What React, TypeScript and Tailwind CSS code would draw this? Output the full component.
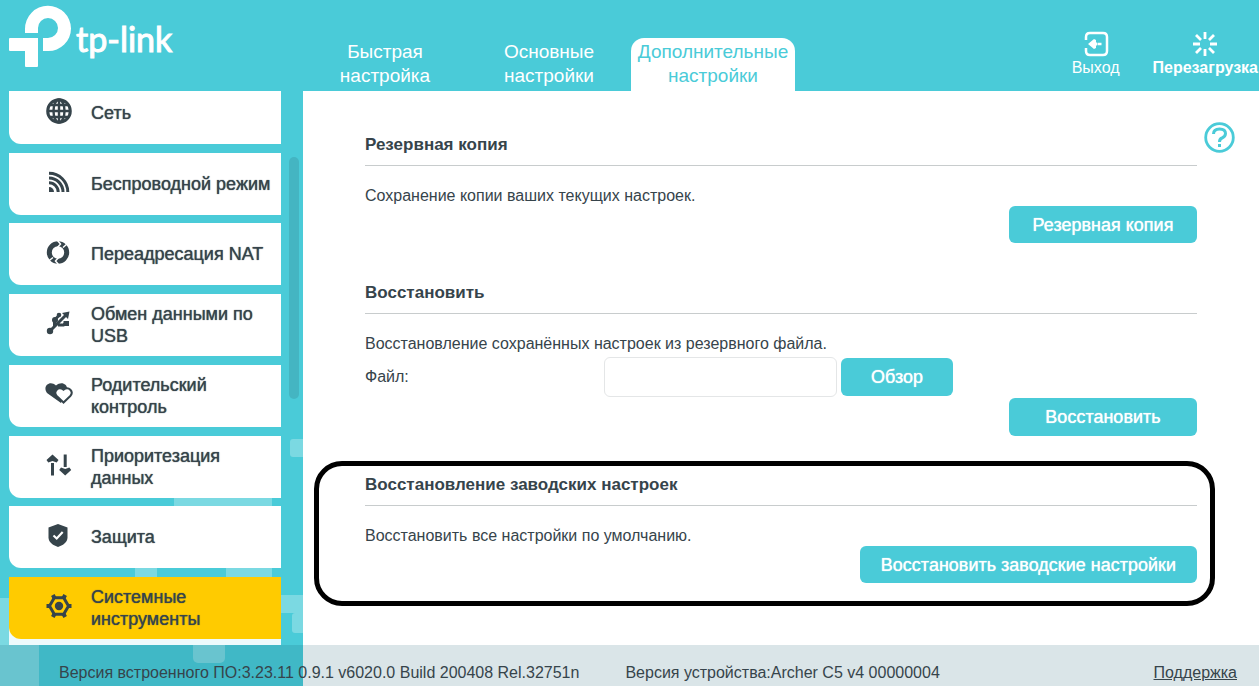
import type { ReactNode } from "react";

const GlobeIcon = () => (
    <svg width="28" height="28" viewBox="0 0 28 28" fill="none" stroke="#36444b" strokeWidth="2.4">
        <circle cx="14" cy="14" r="11.3" strokeWidth="3" />
        <ellipse cx="14" cy="14" rx="5.5" ry="11.5" />
        <path d="M14 2v24M2 14h24M4.5 8h19M4.5 20h19" />
    </svg>
);

const WirelessIcon = () => (
    <svg width="28" height="28" viewBox="0 0 28 28" fill="none" stroke="#36444b" strokeWidth="3">
        <path d="M4 5.2A18.8 18.8 0 0 1 22.8 24M4 10A14 14 0 0 1 18 24M4 14.8A9.2 9.2 0 0 1 13.2 24" />
        <path d="M4 19a5 5 0 0 1 5 5H4z" fill="#36444b" stroke="none" />
    </svg>
);

const NatIcon = () => (
    <svg width="28" height="28" viewBox="0 0 28 28" fill="none" stroke="#36444b">
        <circle cx="13" cy="14.5" r="8.700" strokeWidth="5" />
        <path d="M12.500 2.500l3 3.500-3 3.500M13.500 26.500l-3-3.500 3-3.500" stroke="#fff" strokeWidth="1.500" />
        <path d="M18 9.500l4.500-4M8 19.500l-5 4" stroke="#fff" strokeWidth="1.500" />
    </svg>
);

const UsbIcon = () => (
    <svg width="28" height="28" viewBox="0 0 28 28" fill="none" stroke="#36444b" strokeWidth="3">
        <path d="M5 22L21 6M9.500 17.500V11L14 6.500M13 16h5.500l3-3" />
        <circle cx="5" cy="22" r="3.200" fill="#36444b" stroke="none" />
        <circle cx="10" cy="11" r="3" fill="#36444b" stroke="none" />
        <circle cx="14" cy="6" r="2.300" fill="#36444b" stroke="none" />
        <path d="M17 4l7.500-1.500L23 10z" fill="#36444b" stroke="none" />
        <path d="M18.500 12H24v5h-5.500z" fill="#36444b" stroke="none" />
    </svg>
);

const HeartsIcon = () => (
    <svg width="28" height="28" viewBox="0 0 28 28" fill="#36444b">
        <path d="M16 23L2 13C-3 6 5-.5 11 5.500c5.500-5 12-1 11 4z" />
        <path
            d="M18.500 22.500L11.700 16C8 12 13 5.500 18.500 9.700C24 5.500 29 12 25.300 16z"
            fill="#fff"
            stroke="#36444b"
            strokeWidth="2"
        />
    </svg>
);

const PriorityIcon = () => (
    <svg width="28" height="28" viewBox="0 0 28 28" fill="#36444b">
        <path d="M7.500 3.500l6 5.500-1.800 2.500-4.200-1.500-4.200 1.500L1.500 9z" />
        <path d="M6 12h3v12.500H6zM18.700 3.500h3V16h-3z" />
        <path d="M20.200 24.500l-6-5.500 1.800-2.500 4.200 1.500 4.200-1.500 1.800 2.500z" />
    </svg>
);

const ShieldIcon = () => (
    <svg width="28" height="28" viewBox="0 0 28 28">
        <path d="M13 3l9.500 3.500v10c0 5-5 8-9.500 9.500C8.500 24.500 3.500 21.500 3.500 16.500v-10z" fill="#36444b" />
        <path d="M8.500 14.500l3.200 3 6-6.500" fill="none" stroke="#fff" strokeWidth="2.200" />
    </svg>
);

const GearIcon = () => (
    <svg width="28" height="28" viewBox="0 0 28 28" fill="none" stroke="#36444b">
        <path d="M4.500 14L9.300 5.800h9.400L23.500 14l-4.800 8.200H9.300z" strokeWidth="3" strokeLinejoin="round" />
        <path d="M1.500 14h4M22.500 14h4M7.800 3l2 3.500M20.200 3l-2 3.500M7.800 25l2-3.500M20.200 25l-2-3.500" strokeWidth="4" />
        <circle cx="14" cy="14" r="4.200" fill="#36444b" stroke="none" />
    </svg>
);

const menu: { label: string; icon: ReactNode }[] = [
    { label: "Сеть", icon: <GlobeIcon /> },
    { label: "Беспроводной режим", icon: <WirelessIcon /> },
    { label: "Переадресация NAT", icon: <NatIcon /> },
    { label: "Обмен данными по USB", icon: <UsbIcon /> },
    { label: "Родительский контроль", icon: <HeartsIcon /> },
    { label: "Приоритезация данных", icon: <PriorityIcon /> },
    { label: "Защита", icon: <ShieldIcon /> },
    { label: "Системные инструменты", icon: <GearIcon /> },
];

const tabs = ["Быстрая настройка", "Основные настройки", "Дополнительные настройки"];

function Logo() {
    return (
        <svg width="176" height="74" viewBox="0 0 176 74" fill="#fff" role="img" aria-label="tp-link">
            <path d="M25 33V29A23 23 0 0 1 71 28.500A22.500 22.500 0 0 1 48 51H43V38H48A10 10 0 0 0 58 28A10 10 0 0 0 38 28V33Z" />
            <path d="M10 38H38V66q0 1-1 1H26q-1 0-1-1V51H10q-1 0-1-1V39q0-1 1-1z" />
            <text x="76" y="52" fontSize="34" fontFamily="Lato, sans-serif" stroke="#fff" strokeWidth="1">
                tp-link
            </text>
        </svg>
    );
}

function Header() {
    return (
        <header className="flex h-[91px] shrink-0 justify-between overflow-hidden">
            <div className="flex">
                <a href="#" className="w-[303px]">
                    <Logo />
                </a>
                <nav className="flex items-end">
                    {tabs.map((tab, i) => (
                        <a
                            key={tab}
                            href="#"
                            className={`flex h-[53px] w-[164px] flex-col items-center pt-[2px] text-center text-[19px] leading-[24px] ${i === 2 ? "rounded-t-[13px] bg-white text-[#4acbd8]" : "text-white"}`}
                        >
                            {tab.split(" ").map((word) => (
                                <span key={word}>{word}</span>
                            ))}
                        </a>
                    ))}
                </nav>
            </div>
            <div className="flex items-start gap-[33px] pr-px pt-[30px] text-[16px] leading-[20px] text-white">
                <button className="flex flex-col items-center">
                    <svg width="28" height="28" viewBox="0 0 28 28" fill="none" stroke="#fff" strokeWidth="2.500">
                        <path d="M4 10V7q0-4 4-4h13q4 0 4 4v14q0 4-4 4H8q-4 0-4-4v-3" />
                        <path d="M19.500 14h-4" />
                        <path d="M6 14l6-5 2 1v2.500h1v3h-1V18l-2 1z" fill="#fff" stroke="none" />
                    </svg>
                    Выход
                </button>
                <button className="flex flex-col items-center font-bold">
                    <svg width="28" height="28" viewBox="0 0 28 28" stroke="#fff" strokeWidth="2.800">
                        <path d="M14 2v7M14 19v7M2 14h7M19 14h7M5 5l5 5M18 18l5 5M23 5l-5 5M10 18l-5 5" />
                    </svg>
                    Перезагрузка
                </button>
            </div>
        </header>
    );
}

function Sidebar() {
    return (
        <aside className="flex w-[303px] shrink-0 overflow-hidden pl-[9px]">
            <ul className="-mt-[9px] flex w-[272px] flex-col justify-between">
                {menu.map((item, i) => (
                    <li key={item.label} className={i === 7 ? "bg-[#edfafc] pb-[6px]" : ""}>
                        <a
                            href="#"
                            className={`flex h-[62px] items-center rounded-bl-[12px] pl-[36px] text-[18px] leading-[22px] text-[#36444b] [text-shadow:0_0_1px_currentColor] ${i === 7 ? "bg-[#ffcb00]" : "bg-white"}`}
                        >
                            <span className="mr-[18px] shrink-0 pb-1">{item.icon}</span>
                            <span className={i >= 3 ? "w-[170px]" : "whitespace-nowrap"}>{item.label}</span>
                        </a>
                    </li>
                ))}
            </ul>
            <div className="ml-2 mt-[66px] h-[242px] w-[10px] rounded-full bg-[#44b5c2]"></div>
        </aside>
    );
}

function Section({ title, text, children }: { title: string; text: string; children: ReactNode }) {
    return (
        <section className="text-[16px] leading-[20px]">
            <h2 className="border-b border-[#c8cccd] pb-[9px] text-[17px] font-bold leading-[22px]">{title}</h2>
            <p className="mt-5">{text}</p>
            {children}
        </section>
    );
}

function Button({ children, className = "" }: { children: ReactNode; className?: string }) {
    return (
        <button className={`rounded-md bg-[#4acbd8] text-[18px] text-white [text-shadow:0_0_1px_currentColor] ${className}`}>
            {children}
        </button>
    );
}

export default function App() {
    return (
        <div className="relative flex h-screen min-h-[686px] flex-col overflow-hidden bg-[#4acbd8] font-['Liberation_Sans',Arial,sans-serif] text-[#36444b]">
            <svg className="absolute bottom-0 left-0" width="303" height="260" viewBox="0 426 303 260" fill="#fff" fillOpacity="0.27" aria-hidden="true">
                <rect x="174" y="490" width="98" height="40" />
                <rect x="226" y="540" width="46" height="40" />
                <rect x="135" y="560" width="22" height="40" />
                <rect x="0" y="598" width="39" height="88" />
                <rect x="193" y="630" width="32" height="33" rx="5" />
                <rect x="290" y="439" width="20" height="18" rx="3" />
                <rect x="281" y="595" width="22" height="18" />
                <rect x="292" y="613" width="20" height="20" rx="3" />
            </svg>

            <div className="relative flex flex-1 flex-col">
                <Header />
                <div className="flex flex-1">
                    <div className="flex pb-[41px]">
                        <Sidebar />
                    </div>
                    <main className="relative flex-1 bg-white px-[62px] pt-[43px]">
                        <button aria-label="Справка" className="absolute right-6 top-[31px]">
                            <svg width="31" height="31" viewBox="0 0 31 31" fill="none" stroke="#4acbd8">
                                <circle cx="15.500" cy="15.500" r="13.800" strokeWidth="2.800" />
                                <path d="M9.500 12q0-5 6-5t6 4.500q0 3-3.500 4.500-2.500 1-2.500 4" strokeWidth="3" />
                                <path d="M14 22h3v3h-3z" fill="#4acbd8" stroke="none" />
                            </svg>
                        </button>

                        <Section title="Резервная копия" text="Сохранение копии ваших текущих настроек.">
                            <div className="flex justify-end">
                                <Button className="h-[37px] w-[188px]">Резервная копия</Button>
                            </div>
                        </Section>

                        <div className="mt-[39px]">
                            <Section title="Восстановить" text="Восстановление сохранённых настроек из резервного файла.">
                                <div className="mt-[3px] flex items-center">
                                    <label htmlFor="backup-file" className="w-[239px]">Файл:</label>
                                    <input id="backup-file" type="text" className="mr-1 h-[40px] w-[233px] rounded-md border border-[#e4e6e7] px-2" />
                                    <Button className="h-[38px] w-[112px]">Обзор</Button>
                                </div>
                                <div className="mt-px flex justify-end">
                                    <Button className="h-[38px] w-[188px]">Восстановить</Button>
                                </div>
                            </Section>
                        </div>

                        <div className="-ml-[51px] -mr-[18px] mt-[25px] rounded-[28px] border-[5px] border-black pb-[18px] pl-[46px] pr-[13px] pt-[8px]">
                            <Section title="Восстановление заводских настроек" text="Восстановить все настройки по умолчанию.">
                                <div className="flex justify-end">
                                    <Button className="h-[37px] px-[21px]">Восстановить заводские настройки</Button>
                                </div>
                            </Section>
                        </div>
                    </main>
                </div>
            </div>

            <footer className="absolute inset-x-0 bottom-0 flex h-[41px] items-center bg-[#0a5064]/15 pl-[59px] pr-[22px] pt-[14px] text-[16px] leading-[20px]">
                <span>Версия встроенного ПО:3.23.11 0.9.1 v6020.0 Build 200408 Rel.32751n</span>
                <span className="ml-[46px]">Версия устройства:Archer C5 v4 00000004</span>
                <a href="#" className="ml-auto underline">Поддержка</a>
            </footer>
        </div>
    );
}
